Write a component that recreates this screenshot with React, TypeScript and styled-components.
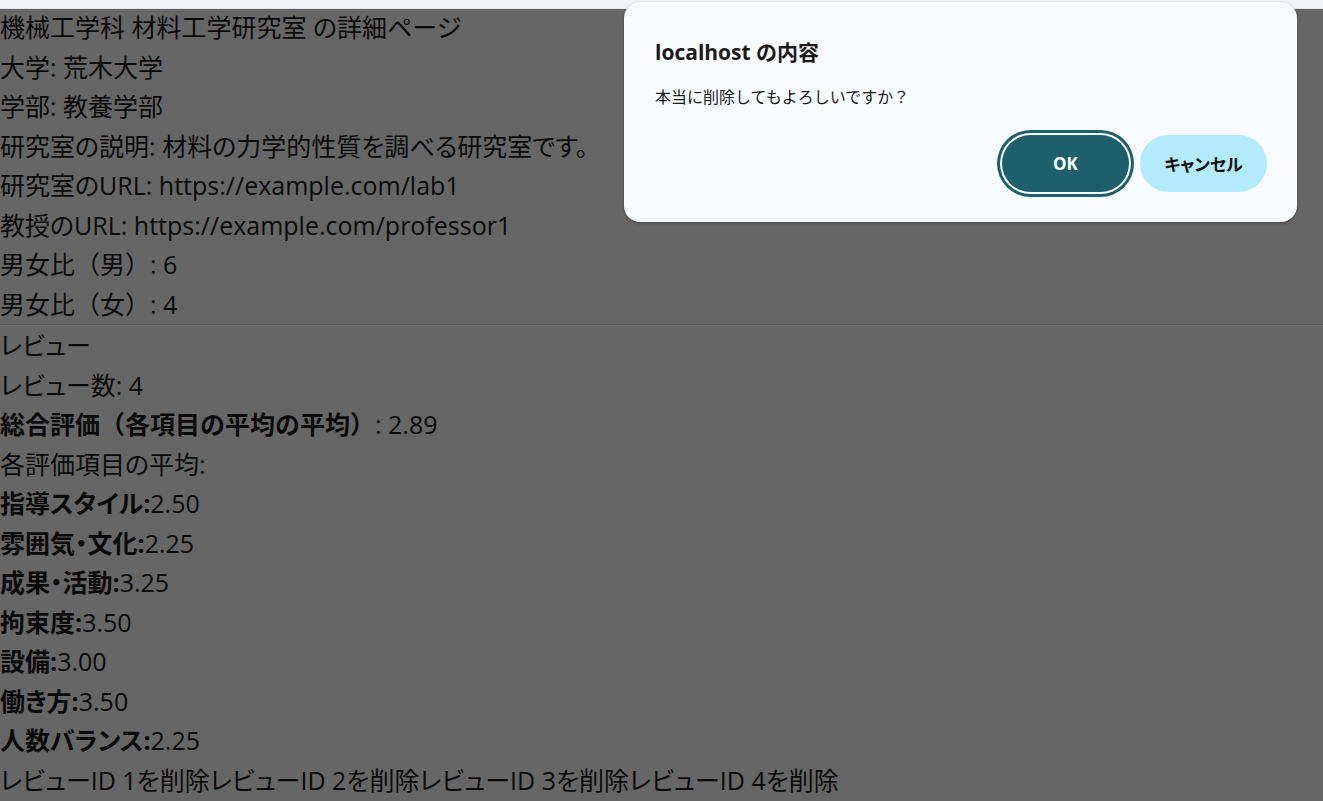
import React from 'react';
import styled, { createGlobalStyle } from 'styled-components';

const GlobalStyle = createGlobalStyle`
  html, body {
    margin: 0;
    padding: 0;
    background: #666666;
  }
  body {
    font-family: 'Open Sans', 'Noto Sans CJK JP', sans-serif;
    color: #0a0a0a;
  }
`;

const Page = styled.div`
  position: relative;
  width: 1323px;
  height: 801px;
  overflow: hidden;
  background: #666666;
`;

const TopStrip = styled.div`
  height: 8px;
  background: #f1f4f7;
  border-bottom: 1px solid #dfe3e8;
`;

const Content = styled.div`
  margin-top: -1px;
`;

// $full keeps full-width brackets (no proportional kana spacing)
const Line = styled.div<{ $full?: boolean }>`
  font-size: 25px;
  line-height: 39.5px;
  height: 39.5px;
  white-space: nowrap;
  font-feature-settings: ${(p) => (p.$full ? 'normal' : "'palt'")};
`;

const Label = styled.span`
  font-weight: 700;
`;

const Divider = styled.hr`
  margin: 0;
  border: none;
  border-top: 1px solid #5c5c5c;
  border-bottom: 1px solid #6e6e6e;
  height: 0;
`;

const Dialog = styled.div`
  position: absolute;
  left: 624px;
  top: 2px;
  width: 673px;
  height: 220px;
  box-sizing: border-box;
  padding: 34px 30px 30px 31px;
  background: #f8fbfe;
  border-radius: 16px;
  box-shadow: 0 1px 3px rgba(0, 0, 0, 0.35);
  display: flex;
  flex-direction: column;
`;

const DialogTitle = styled.div`
  font-size: 21px;
  font-weight: 700;
  line-height: 32px;
  color: #1a1a1a;
`;

const DialogMessage = styled.div`
  margin-top: 18px;
  font-size: 16px;
  line-height: 22px;
  color: #1a1a1a;
`;

const ButtonRow = styled.div`
  margin-top: auto;
  display: flex;
  justify-content: flex-end;
  gap: 11px;
`;

const DialogButton = styled.button<{ $primary?: boolean }>`
  width: 127px;
  height: 57px;
  border: none;
  border-radius: 29px;
  font-family: 'Open Sans', 'Noto Sans CJK JP', sans-serif;
  font-feature-settings: 'palt';
  font-size: 17px;
  font-weight: 700;
  cursor: pointer;
  background: ${(p) => (p.$primary ? '#1d5f6b' : '#b3ebfd')};
  color: ${(p) => (p.$primary ? '#ffffff' : '#111111')};
  box-shadow: ${(p) =>
    p.$primary ? '0 0 0 2px #f8fbfe, 0 0 0 5px #1d5f6b' : 'none'};
`;

const ratings: [string, string][] = [
  ['指導スタイル', '2.50'],
  ['雰囲気・文化', '2.25'],
  ['成果・活動', '3.25'],
  ['拘束度', '3.50'],
  ['設備', '3.00'],
  ['働き方', '3.50'],
  ['人数バランス', '2.25'],
];

function App() {
  return (
    <Page>
      <GlobalStyle />
      <TopStrip />
      <Content>
        <Line>機械工学科 材料工学研究室 の詳細ページ</Line>
        <Line>大学: 荒木大学</Line>
        <Line>学部: 教養学部</Line>
        <Line>研究室の説明: 材料の力学的性質を調べる研究室です。</Line>
        <Line>研究室のURL: https://example.com/lab1</Line>
        <Line>教授のURL: https://example.com/professor1</Line>
        <Line $full>男女比（男）: 6</Line>
        <Line $full>男女比（女）: 4</Line>
        <Divider />
        <Line>レビュー</Line>
        <Line>レビュー数: 4</Line>
        <Line $full>
          <Label>総合評価（各項目の平均の平均）</Label>: 2.89
        </Line>
        <Line>各評価項目の平均:</Line>
        {ratings.map(([name, value]) => (
          <Line key={name}>
            <Label>{name}:</Label>
            {value}
          </Line>
        ))}
        <Line>
          {[1, 2, 3, 4].map((id) => (
            <span key={id}>レビューID {id}を削除</span>
          ))}
        </Line>
      </Content>
      <Dialog>
        <DialogTitle>localhost の内容</DialogTitle>
        <DialogMessage>本当に削除してもよろしいですか？</DialogMessage>
        <ButtonRow>
          <DialogButton $primary>OK</DialogButton>
          <DialogButton>キャンセル</DialogButton>
        </ButtonRow>
      </Dialog>
    </Page>
  );
}

export default App;
